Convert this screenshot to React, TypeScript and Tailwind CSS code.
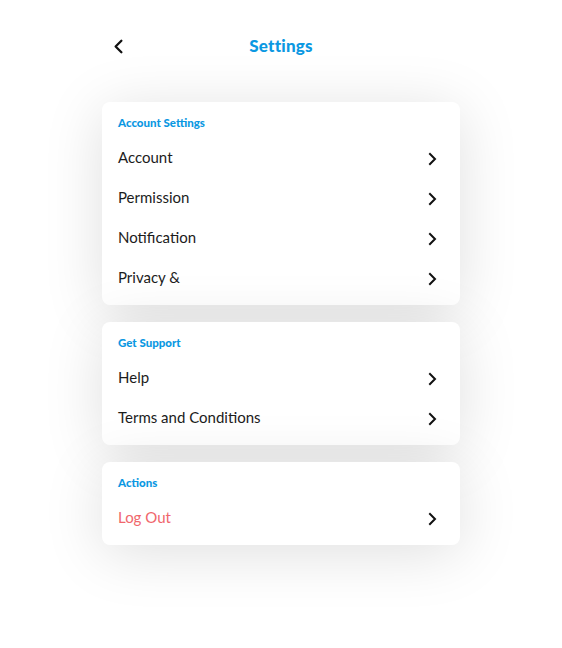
import { ChevronLeft } from "lucide-react";

interface SettingsRowProps {
  danger?: boolean;
  label: string;
}

const Chevron = () => (
  <svg
    className="mt-[3px] h-[14px] w-[9px]"
    fill="none"
    stroke="currentColor"
    strokeLinecap="square"
    strokeWidth={2}
    viewBox="0 0 9 14"
  >
    <path d="M2 2l5 5-5 5" />
  </svg>
);

const SettingsRow = ({ danger = false, label }: SettingsRowProps) => {
  return (
    <button
      className="flex h-10 w-full items-center justify-between pr-[23px] pl-4 text-start text-[#111]"
      type="button"
    >
      <span className={`text-[15px] ${danger ? "text-[#f0676c]" : "text-[#1c1c1c]"}`}>
        {label}
      </span>
      <Chevron />
    </button>
  );
};

interface SectionCardProps {
  items: { danger?: boolean; label: string }[];
  title: string;
}

const SectionCard = ({ items, title }: SectionCardProps) => {
  return (
    <section className="w-[358px] rounded-lg bg-white pt-[13px] pb-2 shadow-[0_8px_60px_rgba(0,0,0,0.13)]">
      <h2 className="h-4 pl-4 text-[11.5px] leading-4 font-black text-[#0b98e2]">{title}</h2>
      <div className="mt-1.5">
        {items.map((item) => (
          <SettingsRow danger={item.danger} key={item.label} label={item.label} />
        ))}
      </div>
    </section>
  );
};

export default function App() {
  return (
    <div className="flex min-h-[648px] w-full flex-col items-center bg-white pt-[34px] font-['Lato',sans-serif]">
      <header className="relative flex h-6 w-[358px] items-center justify-center">
        <button className="absolute left-[5px] mt-[1px] text-[#111]" type="button">
          <ChevronLeft className="size-[23px]" strokeWidth={2.4} />
        </button>
        <h1 className="text-[17px] font-black tracking-[0.2px] text-[#0b98e2]">Settings</h1>
      </header>

      <main className="mt-[44px] flex flex-col gap-[17px]">
        <SectionCard
          items={[
            { label: "Account" },
            { label: "Permission" },
            { label: "Notification" },
            { label: "Privacy &" },
          ]}
          title="Account Settings"
        />
        <SectionCard
          items={[{ label: "Help" }, { label: "Terms and Conditions" }]}
          title="Get Support"
        />
        <SectionCard items={[{ danger: true, label: "Log Out" }]} title="Actions" />
      </main>
    </div>
  );
}
